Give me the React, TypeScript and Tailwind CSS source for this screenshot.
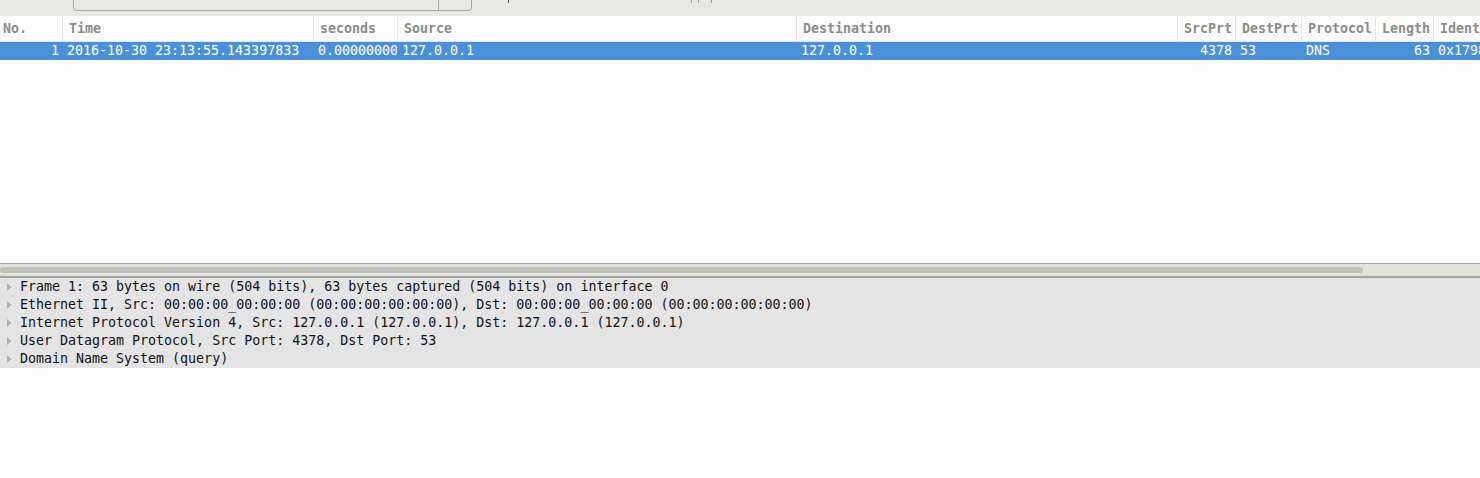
const columns = [
  { name: "No.", width: 62, first: true },
  { name: "Time", width: 251 },
  { name: "seconds", width: 84 },
  { name: "Source", width: 399 },
  { name: "Destination", width: 381 },
  { name: "SrcPrt", width: 58 },
  { name: "DestPrt", width: 66 },
  { name: "Protocol", width: 74 },
  { name: "Length", width: 58 },
  { name: "Ident", width: 60 },
];

const packet = [
  { text: "1", right: true },
  { text: "2016-10-30 23:13:55.143397833" },
  { text: "0.000000000" },
  { text: "127.0.0.1" },
  { text: "127.0.0.1" },
  { text: "4378", right: true },
  { text: "53" },
  { text: "DNS" },
  { text: "63", right: true },
  { text: "0x1798" },
];

const tree = [
  "Frame 1: 63 bytes on wire (504 bits), 63 bytes captured (504 bits) on interface 0",
  "Ethernet II, Src: 00:00:00_00:00:00 (00:00:00:00:00:00), Dst: 00:00:00_00:00:00 (00:00:00:00:00:00)",
  "Internet Protocol Version 4, Src: 127.0.0.1 (127.0.0.1), Dst: 127.0.0.1 (127.0.0.1)",
  "User Datagram Protocol, Src Port: 4378, Dst Port: 53",
  "Domain Name System (query)",
];

const Expander = () => (
  <svg width="6" height="10" viewBox="0 0 6 10" className="shrink-0">
    <path d="M1 1 L5.5 5 L1 9 Z" fill="#aeaeac" />
  </svg>
);

const App = () => {
  return (
    <div className="w-[1480px] h-[478px] overflow-hidden bg-[#fcfcfc] flex flex-col font-['DejaVu_Sans_Mono',monospace] text-[13.3px]">
      {/* filter toolbar, cut off at the top */}
      <div className="h-[16px] shrink-0 bg-[#e8e8e7] flex items-start overflow-hidden">
        <div className="ml-[73px] mt-[-11px] h-[22px] w-[366px] border border-[#a6a6a3] rounded-bl-[4px] bg-[#e9e9e8]" />
        <div className="mt-[-11px] h-[22px] w-[33px] border border-l-0 border-[#a6a6a3] rounded-br-[4px] bg-[#e9e9e8]" />
        <div className="ml-[36px] w-px h-[3px] bg-[#555]" />
        <div className="ml-[182px] w-px h-[3px] bg-[#999]" />
        <div className="ml-[6px] w-px h-[3px] bg-[#999]" />
        <div className="ml-[12px] w-px h-[3px] bg-[#999]" />
      </div>

      {/* column headers */}
      <div className="h-[26px] shrink-0 flex border-b border-[#e6e6e4] bg-[#fcfcfc]">
        {columns.map((col) => (
          <div
            key={col.name}
            style={{ width: col.width }}
            className={`shrink-0 flex items-center overflow-hidden whitespace-nowrap font-bold text-[#8b8d8a] ${
              col.first ? "pl-[3px]" : "border-l border-[#e6e6e4] pl-[6px]"
            }`}
          >
            {col.name}
          </div>
        ))}
      </div>

      {/* selected packet */}
      <div className="h-[18px] shrink-0 flex bg-[#4a90d9] text-white">
        {packet.map((cell, i) => (
          <div
            key={i}
            style={{ width: columns[i].width }}
            className={`shrink-0 flex items-center overflow-hidden whitespace-nowrap ${
              cell.right ? "justify-end pr-[3px]" : i === 0 ? "" : "pl-[5px]"
            }`}
          >
            {cell.text}
          </div>
        ))}
      </div>

      <div className="h-[203px] shrink-0" />

      {/* horizontal scrollbar */}
      <div className="h-[15px] shrink-0 border-t border-[#a8a8a5] border-b-2 border-b-[#a2a29e] bg-[#e1e1df] flex items-center">
        <div className="h-[6px] w-[1363px] rounded-full bg-[#c1c1bf]" />
      </div>

      {/* packet details */}
      <div className="h-[90px] shrink-0 bg-[#e4e4e4] flex flex-col">
        {tree.map((line) => (
          <div key={line} className="h-[18px] flex items-center text-[#111] whitespace-nowrap">
            <div className="w-[20px] pl-[6px] flex items-center">
              <Expander />
            </div>
            <span>{line}</span>
          </div>
        ))}
      </div>

      <div className="flex-1" />
    </div>
  );
};

export default App;
